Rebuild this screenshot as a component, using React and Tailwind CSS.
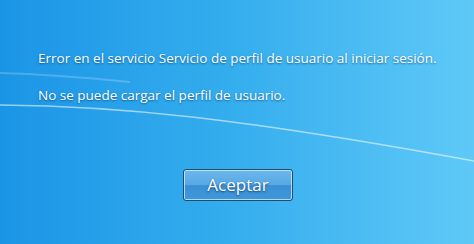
export default function App() {
  return (
    <div className="relative w-[474px] h-[244px] overflow-hidden bg-gradient-to-r from-[#1a95e6] via-[#35aeee] to-[#5ec9f7] font-['Open_Sans',sans-serif]">
      {/* wallpaper streaks */}
      <svg className="absolute inset-0" width="474" height="244" viewBox="0 0 474 244" fill="none">
        <path d="M0 105 C 120 106, 240 118, 474 161" stroke="#ffffff" strokeOpacity="0.55" strokeWidth="1.3" />
        <path d="M0 73 C 40 74, 80 77, 130 82" stroke="#ffffff" strokeOpacity="0.2" strokeWidth="2" />
      </svg>
      <div className="relative flex flex-col pl-[38px] pt-[48px] text-white text-[13.5px] leading-[20px] whitespace-nowrap [text-shadow:0_1px_2px_rgba(0,40,90,0.6)]">
        <p>Error en el servicio Servicio de perfil de usuario al iniciar sesión.</p>
        <p className="mt-[17px]">No se puede cargar el perfil de usuario.</p>
      </div>
      <div className="relative flex justify-center pt-[64px]">
        <button className="ml-[2px] w-[110px] h-[32px] rounded-[3px] border border-[#1f4b74] bg-[linear-gradient(to_bottom,#6cb8ec_0%,#55a8e4_50%,#3a8fd4_52%,#3f98da_100%)] shadow-[inset_0_0_0_1px_rgba(220,240,255,0.75)] text-white text-[17px] [text-shadow:0_1px_2px_rgba(0,30,70,0.7)]">
          Aceptar
        </button>
      </div>
    </div>
  );
}
